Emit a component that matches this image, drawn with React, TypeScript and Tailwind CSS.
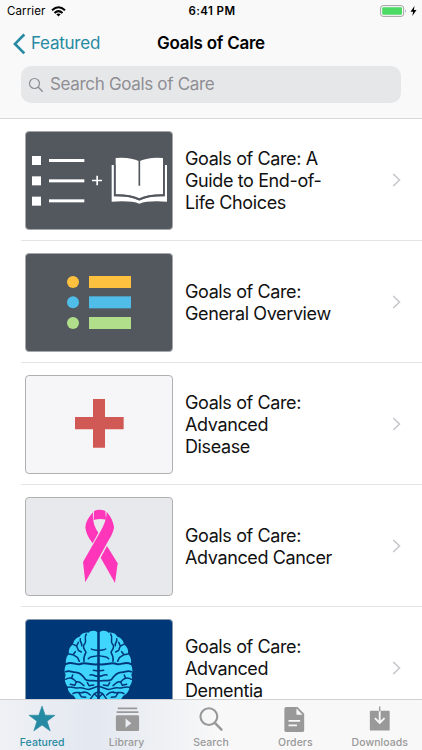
import type { ReactNode } from "react";

const GuideArt = () => (
  <svg viewBox="33 35 438 291" className="block h-full w-full">
    <g fill="#fff">
      <rect x="51" y="107" width="27" height="27" />
      <rect x="51" y="168" width="27" height="27" />
      <rect x="51" y="229" width="27" height="27" />
      <rect x="102" y="116" width="106" height="9" />
      <rect x="102" y="177" width="106" height="9" />
      <rect x="102" y="237" width="106" height="9" />
      <path d="M231 178h13v-12h5v12h12v5h-12v12h-5v-12h-13z" />
      <path d="M290 134h7v94q45-2 76 12q31-14 76-12v-94h7v110q-58-4-83 6q-25-10-83-6z" />
      <path d="M302 113q42-4 71 10q29-14 71-10v109q-44-1-71 12q-27-13-71-12z" />
    </g>
    <path d="M373 122v74" stroke="#53575e" strokeWidth="5" fill="none" />
    <path d="M299 134v91q48-1 74 13q26-14 74-13v-91" stroke="#53575e" strokeWidth="5" fill="none" />
  </svg>
);

const ListArt = () => (
  <svg viewBox="33 42 438 291" className="block h-full w-full">
    <g fill="#fdc13f"><circle cx="174" cy="126" r="18" /><rect x="222" y="108" width="126" height="36" /></g>
    <g fill="#50bde9"><circle cx="174" cy="187" r="18" /><rect x="222" y="169" width="126" height="36" /></g>
    <g fill="#b1de8a"><circle cx="174" cy="249" r="18" /><rect x="222" y="231" width="126" height="36" /></g>
  </svg>
);

const CrossArt = () => (
  <svg viewBox="33 33 438 291" className="block h-full w-full">
    <path fill="#d15955" d="M234 102h36v54h56v37h-56v55h-36v-55h-54v-37h54z" />
  </svg>
);

const RibbonArt = () => (
  <svg viewBox="33 30 438 291" className="block h-full w-full">
    <g fill="#ff36b9">
      <path d="M237 69Q254 62 271 69L273 95Q254 91 236 96Z" />
      <path d="M234 73C220 88 212 102 211 118C213 137 223 153 233 166L250 134C240 119 232 102 234 73Z" />
      <path d="M275 71C288 86 295 101 297 117C296 132 286 149 278 162L211 283L204 222L255 133C267 111 274 96 275 71Z" />
      <path d="M276 174L308 226L300 285L257 209Z" />
    </g>
  </svg>
);

const BrainHalf = () => (
  <g>
    <path
      fill="#3fd5fc"
      d="M247 70C239 63 226 65 221 71C207 68 197 76 194 83C181 86 174 98 175 106C164 113 160 124 162 134C152 145 151 158 154 166C147 178 148 190 152 198C147 212 151 225 158 233C158 247 167 256 176 260C184 275 198 284 210 289L247 293Z"
    />
    <g fill="none" stroke="#00387a" strokeWidth="4.500" strokeLinecap="round" strokeLinejoin="round">
      <path d="M214 75C205 88 217 94 209 105C199 113 209 121 213 130C208 138 205 145 207 157" />
      <path d="M154 165C169 156 184 169 196 165C212 157 224 169 249 166" strokeWidth="6" />
      <path d="M249 125C242 121 235 125 229 120" />
      <path d="M249 140C236 145 227 140 220 149" />
      <path d="M196 89C193 99 202 100 200 110" />
      <path d="M176 107L185 111L190 124L199 129M185 111L190 100" />
      <path d="M162 135L174 137L181 128M174 137L188 146L193 157" />
      <path d="M152 188C165 182 170 191 183 190C194 190 203 199 211 211C219 219 232 212 249 216" strokeWidth="5" />
      <path d="M249 186C243 183 239 185 235 184" />
      <path d="M249 202C239 203 235 195 225 198" />
      <path d="M152 211C165 202 176 209 184 219C196 215 199 226 207 230" />
      <path d="M170 207L173 198M184 219L179 229L166 226" />
      <path d="M158 235C172 230 181 241 195 236C207 235 215 245 226 240L249 232" />
      <path d="M217 221L222 230L236 228" />
      <path d="M174 254C185 245 194 256 208 249C217 249 222 254 226 258" />
      <path d="M249 249L238 254L222 276M238 254L249 265M192 252L199 263L212 265" />
    </g>
  </g>
);

const BrainArt = () => (
  <svg viewBox="33 33 438 291" className="block h-full w-full">
    <BrainHalf />
    <g transform="translate(501 0) scale(-1 1)"><BrainHalf /></g>
    <path d="M250.500 64V294" stroke="#00387a" strokeWidth="5" />
  </svg>
);

const topics: { lines: string[]; bg: string; border: string; art: ReactNode }[] = [
  { lines: ["Goals of Care: A", "Guide to End-of-", "Life Choices"], bg: "bg-[#53575e]", border: "border-[#a5a7aa]", art: <GuideArt /> },
  { lines: ["Goals of Care:", "General Overview"], bg: "bg-[#53575e]", border: "border-[#a5a7aa]", art: <ListArt /> },
  { lines: ["Goals of Care:", "Advanced", "Disease"], bg: "bg-[#f6f6f8]", border: "border-[#b0b0b1]", art: <CrossArt /> },
  { lines: ["Goals of Care:", "Advanced Cancer"], bg: "bg-[#e7e9ed]", border: "border-[#b0b0b1]", art: <RibbonArt /> },
  { lines: ["Goals of Care:", "Advanced", "Dementia"], bg: "bg-[#003776]", border: "border-[#8798ad]", art: <BrainArt /> },
];

const tabs: { label: string; active?: boolean; icon: ReactNode }[] = [
  {
    label: "Featured",
    active: true,
    icon: <path fill="currentColor" stroke="currentColor" strokeWidth=".6" strokeLinejoin="round" d="M15 1l3.300 9.600h10.200l-8.200 6.200 3.200 10-8.500-6-8.500 6 3.200-10-8.200-6.200h10.200z" />,
  },
  {
    label: "Library",
    icon: (
      <>
        <path fill="currentColor" d="M5.500 2.500h20v1.800h-20zM4.300 6.500h22.500v1.800H4.300z" />
        <path fill="currentColor" fillRule="evenodd" d="M5 10.500h21q1.500 0 1.500 1.500v13.500q0 1.500-1.500 1.500h-21q-1.500 0-1.500-1.500V12q0-1.500 1.500-1.500zM13.500 14v9.500l6-4.750z" />
      </>
    ),
  },
  {
    label: "Search",
    icon: (
      <g fill="none" stroke="currentColor" strokeWidth="2.200" strokeLinecap="round">
        <circle cx="12.800" cy="12" r="8.700" />
        <path d="M19 18.500l6.800 7" strokeWidth="2.600" />
      </g>
    ),
  },
  {
    label: "Orders",
    icon: (
      <>
        <path fill="currentColor" d="M6 2h11.500l7 7v17q0 2-2 2H6q-2 0-2-2V4q0-2 2-2z" />
        <path d="M16.500 3.700v6.300h6.300z" fill="#f8f8f8" />
        <path d="M8.300 16.300h12M8.300 21h8.700" stroke="#f8f8f8" strokeWidth="1.800" />
      </>
    ),
  },
  {
    label: "Downloads",
    icon: (
      <>
        <path fill="currentColor" d="M5.500 6h18.500q1 0 1 1v18.500q0 1-1 1H5.500q-1 0-1-1V7q0-1 1-1z" />
        <path d="M14.700 6v12.500M9.700 13.500l5 5 5-5" fill="none" stroke="#f8f8f8" strokeWidth="1.900" />
        <path d="M14.700 1.500v5" stroke="currentColor" strokeWidth="1.400" />
      </>
    ),
  },
];

function StatusBar() {
  return (
    <div className="grid h-[22px] grid-cols-3 items-center pr-[5px] pl-[7px] text-[11.500px] leading-[22px] text-black">
      <div className="flex items-center gap-[6px]">
        <span className="tracking-[0.100px]">Carrier</span>
        <svg viewBox="0 0 15 11" className="h-[11px] w-[15px]">
          <g fill="none" stroke="#000" strokeWidth="2">
            <path d="M1 4.200Q7.500-1.800 14 4.200" />
            <path d="M3.500 6.900Q7.500 3.300 11.500 6.900" />
          </g>
          <path d="M5.300 8.300Q7.500 6.600 9.700 8.300L7.500 10.600z" />
        </svg>
      </div>
      <div className="text-center font-semibold tracking-[0.400px]">6:41 PM</div>
      <div className="flex items-center justify-end gap-[3px]">
        <svg viewBox="0 0 27 12" className="h-[12px] w-[27px]">
          <rect x=".6" y=".6" width="23" height="10.800" rx="2.500" fill="none" stroke="#a2a2a2" strokeWidth="1" />
          <rect x="2.200" y="2.200" width="19.800" height="7.600" rx="1" fill="#4cd964" />
          <path d="M25 4q1.500 2 0 4z" fill="#a2a2a2" />
        </svg>
        <svg viewBox="0 0 7 10" className="h-[10px] w-[7px]">
          <path d="M4.500 0L.5 5.700h2.600L2.300 10l4.200-6H3.900z" />
        </svg>
      </div>
    </div>
  );
}

export default function App() {
  return (
    <div className="relative flex h-[750px] w-[422px] flex-col overflow-hidden bg-white font-['Inter','Liberation_Sans',sans-serif]">
      <header className="h-[119px] shrink-0 border-b border-[#d8d8da] bg-[#f9f9f9]">
        <StatusBar />
        <div className="grid h-[43px] grid-cols-[1fr_auto_1fr] items-center">
          <a className="flex items-center gap-[5px] pl-[13px] text-[#278aa3]">
            <svg viewBox="0 0 13 22" className="h-[22px] w-[13px]">
              <path d="M11.300 1.500L2 10.900l9.300 9.500" fill="none" stroke="currentColor" strokeWidth="2.700" />
            </svg>
            <span className="text-[17px] tracking-[-0.250px]">Featured</span>
          </a>
          <h1 className="text-[17px] font-semibold tracking-[-0.250px] text-black">Goals of Care</h1>
        </div>
        <div className="mx-[21px] mt-[1px] flex h-[37px] items-center gap-[6px] rounded-[10px] bg-[#e6e7e9] pl-[7px] text-[#8e8e93]">
          <svg viewBox="0 0 16 16" className="h-[16px] w-[16px]">
            <circle cx="6.500" cy="6.500" r="5" fill="none" stroke="currentColor" strokeWidth="1.200" />
            <path d="M10.100 10.100l4.600 4.600" stroke="currentColor" strokeWidth="1.400" />
          </svg>
          <span className="text-[17px] tracking-[-0.330px]">Search Goals of Care</span>
        </div>
      </header>

      <main className="flex shrink-0 flex-col pl-[21px]">
        {topics.map((topic, i) => (
          <div key={i} className="flex h-[122px] items-center border-b border-[#e4e4e5] pt-[1px] pr-[21px] pl-[4px]">
            <div className={`h-[99px] w-[148px] shrink-0 overflow-hidden rounded-[4px] border ${topic.bg} ${topic.border}`}>
              {topic.art}
            </div>
            <div className="ml-[12px] grow pt-[2px] text-[18px] leading-[21.700px] tracking-[-0.380px] whitespace-nowrap text-[#111]">
              {topic.lines.map((line) => (
                <div key={line}>{line}</div>
              ))}
            </div>
            <svg viewBox="0 0 9 14" className="mb-[1px] h-[14px] w-[9px] shrink-0">
              <path d="M1.300 1l6.200 6-6.200 6" fill="none" stroke="#c7c7cc" strokeWidth="1.600" />
            </svg>
          </div>
        ))}
      </main>

      <nav className="absolute inset-x-0 bottom-0 grid h-[51px] grid-cols-5 border-t border-[#cfd0d3] bg-linear-to-r from-[#eff1f5] via-[#e3e8f0] via-22% to-[#f8f8f8] to-52%">
        {tabs.map((tab) => (
          <a key={tab.label} className={`flex flex-col items-center pt-[5px] ${tab.active ? "text-[#278aa3]" : "text-[#999]"}`}>
            <svg viewBox="0 0 30 30" className="h-[29px] w-[30px]">{tab.icon}</svg>
            <span className="mt-[2px] text-[10.500px] leading-[13px] font-medium tracking-[0.050px]">{tab.label}</span>
          </a>
        ))}
      </nav>
    </div>
  );
}
